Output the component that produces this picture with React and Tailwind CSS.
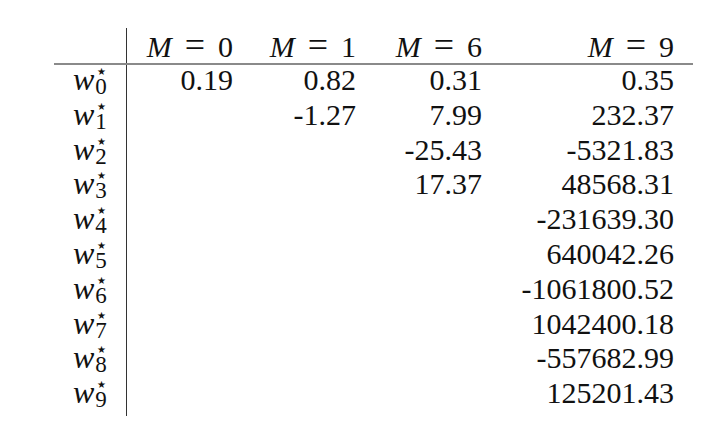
const cols = ['0', '1', '6', '9']
const widths = ['w-[106px]', 'w-[123px]', 'w-[126px]', 'w-[192px]']

const rows = [
  ['0.19', '0.82', '0.31', '0.35'],
  ['', '-1.27', '7.99', '232.37'],
  ['', '', '-25.43', '-5321.83'],
  ['', '', '17.37', '48568.31'],
  ['', '', '', '-231639.30'],
  ['', '', '', '640042.26'],
  ['', '', '', '-1061800.52'],
  ['', '', '', '1042400.18'],
  ['', '', '', '-557682.99'],
  ['', '', '', '125201.43'],
]

// w*_i row label, star over the subscript like LaTeX does
function Weight({ i }) {
  return (
    <div className="flex items-start pl-[19px]">
      <span className="italic text-[32px] leading-[30px] -mt-[1px]">w</span>
      <span className="flex flex-col items-start ml-[1px] mt-[3px]">
        <span className="text-[10px] leading-[8px] pl-[2px]">★</span>
        <span className="text-[23px] leading-[16px] mt-[3px]">{i}</span>
      </span>
    </div>
  )
}

export default function App() {
  return (
    <div className="min-h-screen bg-white pt-[28px] pl-[54px] text-[#111] font-['Liberation_Serif','Times_New_Roman',serif]">
      <div className="inline-flex flex-col">
        {/* header */}
        <div className="flex h-[35px] items-center">
          <div className="w-[73px] h-full border-r border-[#333]" />
          {cols.map((m, k) => (
            <div key={m} className={`${widths[k]} flex justify-end items-baseline text-[30px] leading-[35px]`}>
              <span className="italic">M</span>
              <span className="mx-[13px] text-[36px]">=</span>
              <span>{m}</span>
            </div>
          ))}
          <div className="w-[19px]" />
        </div>
        <div className="h-[2px] bg-[#8a8a8a]" />
        {rows.map((r, i) => (
          <div key={i} className="flex h-[34.8px]">
            <div className="w-[73px] h-full border-r border-[#333]">
              <Weight i={i} />
            </div>
            {r.map((v, k) => (
              <div key={k} className={`${widths[k]} text-right text-[30px] leading-[30px]`}>
                {v}
              </div>
            ))}
            <div className="w-[19px]" />
          </div>
        ))}
        <div className="w-[73px] h-[3px] border-r border-[#333]" />
      </div>
    </div>
  )
}
